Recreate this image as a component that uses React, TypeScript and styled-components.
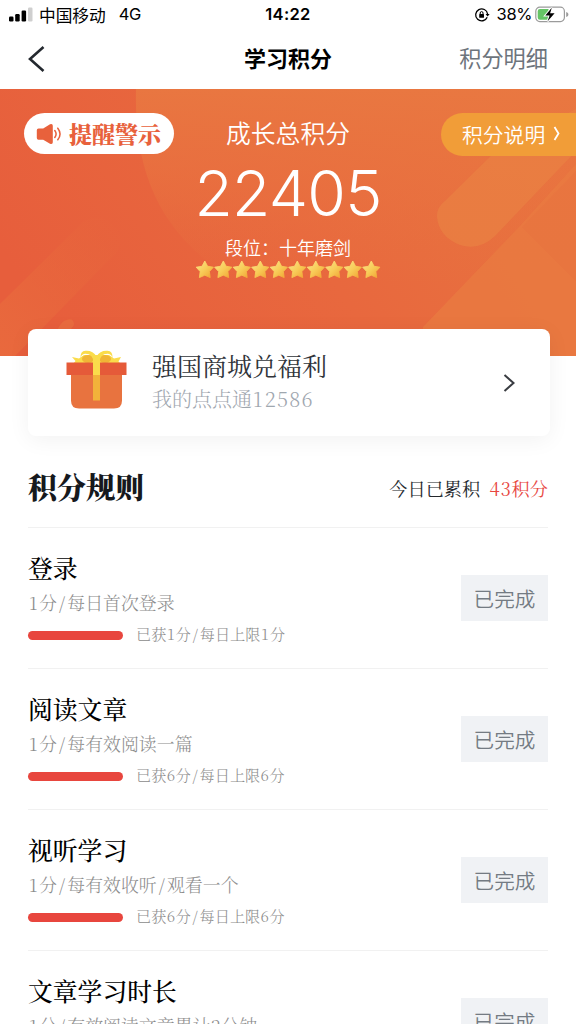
import React from 'react';
import styled, { createGlobalStyle } from 'styled-components';

const sans = `"Noto Sans CJK SC", sans-serif`;
const serif = `"Noto Serif CJK SC", "Source Han Serif SC", "Liberation Serif", "Noto Sans CJK SC", serif`;

const GlobalStyle = createGlobalStyle`
  * { box-sizing: border-box; }
  body { margin: 0; background: #fff; overflow: hidden; }
`;

const Screen = styled.div`
  width: 576px;
  height: 1024px;
  overflow: hidden;
  background: #fff;
  color: #000;
  font-family: ${sans};
`;

const StatusBar = styled.header`
  height: 29px;
  padding: 0 7px 0 9px;
  display: grid;
  grid-template-columns: 1fr auto 1fr;
  align-items: center;
  font-size: 16px;
  line-height: 29px;
`;

const StatusGroup = styled.div<{ $end?: boolean }>`
  display: flex;
  align-items: center;
  justify-content: ${p => (p.$end ? 'flex-end' : 'flex-start')};
  white-space: nowrap;
`;

const Carrier = styled.span`
  margin-left: 6px;
  font-size: 16.7px;
  line-height: 28px;
`;

const Network = styled.span`
  margin-left: 13px;
  font-family: Inter, sans-serif;
  font-size: 16.5px;
  letter-spacing: -0.4px;
`;

const Clock = styled.span`
  margin-right: 2px;
  font-family: Inter, sans-serif;
  font-weight: 600;
  font-size: 16.5px;
  letter-spacing: 0.3px;
`;

const Percent = styled.span`
  margin: 0 3px 0 7px;
  font-family: Inter, sans-serif;
  font-size: 16.5px;
  letter-spacing: -0.4px;
`;

const NavBar = styled.nav`
  height: 60px;
  padding: 0 28px 1px 28px;
  display: grid;
  grid-template-columns: 1fr auto 1fr;
  align-items: center;
`;

const NavTitle = styled.h1`
  margin: 0;
  padding-bottom: 2px;
  font-size: 22px;
  font-weight: 700;
  line-height: 55px;
`;

const NavLink = styled.span`
  justify-self: end;
  padding-bottom: 2px;
  font-size: 22.2px;
  line-height: 55px;
  color: #6d747c;
`;

const Hero = styled.section`
  position: relative;
  height: 267px;
  display: grid;
  grid-template-columns: 1fr 200px 1fr;
  align-items: start;
  color: #fff;
`;

const HeroArt = styled.svg`
  position: absolute;
  inset: 0;
`;

const AlertPill = styled.div`
  position: relative;
  margin: 24px 0 0 24px;
  width: 150px;
  height: 41px;
  padding-left: 12px;
  border-radius: 21px;
  display: flex;
  align-items: center;
  gap: 7px;
  background: #fff;
  color: #e8613c;
  font-family: ${serif};
  font-weight: 900;
  font-size: 23px;
  line-height: 38px;
  white-space: nowrap;
`;

const HelpTab = styled.div`
  position: relative;
  justify-self: end;
  margin-top: 24px;
  width: 135px;
  height: 43px;
  padding: 0 0 0 21px;
  border-radius: 22px 0 0 22px;
  display: flex;
  align-items: center;
  gap: 8px;
  background: #f19d38;
  font-size: 20.8px;
  font-weight: 350;
  line-height: 39px;
  white-space: nowrap;

  & > svg {
    margin-bottom: 2px;
  }
`;

const Score = styled.div`
  position: relative;
  display: flex;
  flex-direction: column;
  align-items: center;
  padding-top: 25px;
  white-space: nowrap;
`;

const ScoreLabel = styled.div`
  font-size: 24.8px;
  font-weight: 350;
  line-height: 36px;
`;

const ScoreValue = styled.div`
  margin-top: 10px;
  font-family: Inter, sans-serif;
  font-weight: 300;
  font-size: 62.5px;
  line-height: 66px;
  letter-spacing: -0.7px;
`;

const Rank = styled.div`
  margin-top: 8px;
  font-size: 18px;
  font-weight: 350;
  line-height: 26px;
`;

const Stars = styled.svg`
  display: block;
`;

const MallCard = styled.section`
  position: relative;
  margin: -27px 26px 0 28px;
  height: 107px;
  padding: 0 35px 0 38px;
  border-radius: 8px;
  display: flex;
  align-items: center;
  background: #fff;
  box-shadow: 0 4px 22px rgba(0, 0, 0, 0.055);

  & > svg:first-child {
    margin-bottom: 6px;
  }
`;

const MallText = styled.div`
  flex: 1;
  margin-left: 25px;
  padding-bottom: 2px;
  font-family: ${serif};
`;

const MallTitle = styled.div`
  font-size: 25px;
  line-height: 34px;
  color: #30343a;
`;

const MallBalance = styled.div`
  font-size: 20px;
  font-weight: 300;
  line-height: 33px;
  color: #9fa7af;
`;

const RulesHeader = styled.section`
  margin: 0 28px;
  height: 92px;
  padding-top: 11px;
  border-bottom: 1px solid #f1f1f1;
  display: flex;
  align-items: center;
  justify-content: space-between;
  font-family: ${serif};
`;

const RulesTitle = styled.h2`
  margin: 0;
  font-size: 29px;
  font-weight: 900;
  line-height: 40px;
  color: #16191d;
`;

const Today = styled.div`
  padding-top: 1px;
  display: flex;
  gap: 9px;
  font-size: 18.2px;
  line-height: 36px;
  color: #24282d;
`;

const TodayPoints = styled.span`
  color: #e8473f;
`;

const Rule = styled.article`
  margin: 0 28px;
  height: 141px;
  border-bottom: 1px solid #f1f1f1;
  display: flex;
  justify-content: space-between;
  font-family: ${serif};
  white-space: nowrap;
`;

const RuleBody = styled.div`
  padding-top: 20px;
`;

const RuleTitle = styled.h3`
  margin: 0 0 1px;
  font-size: 24.8px;
  font-weight: 500;
  line-height: 38px;
`;

const RuleDesc = styled.div`
  font-size: 17.9px;
  font-weight: 300;
  line-height: 30px;
  color: #8c8c8c;
`;

const RuleProgress = styled.div`
  display: flex;
  align-items: center;
  gap: 13px;
  font-size: 15.2px;
  font-weight: 300;
  line-height: 34px;
  color: #8c8c8c;
`;

const Bar = styled.div`
  margin-top: 3px;
  width: 95px;
  height: 9px;
  border-radius: 5px;
  background: #e8463e;
`;

const DoneBadge = styled.div`
  margin-top: 47px;
  width: 87px;
  height: 46px;
  background: #f0f2f5;
  color: #747b83;
  font-family: ${sans};
  font-size: 20.6px;
  font-weight: 350;
  line-height: 46px;
  text-align: center;
`;

const Spaced = styled.span<{ $lead: number; $trail: number }>`
  margin-left: ${p => p.$lead}em;
  letter-spacing: ${p => p.$trail}em;
`;

const Wide = ({ text }: { text: string }) => (
  <span>
    {text.split(/([0-9/])/).map((part, i) => {
      if (part === '1') return <Spaced key={i} $lead={0.05} $trail={0.1}>{part}</Spaced>;
      if (part === '/') return <Spaced key={i} $lead={0.11} $trail={0.12}>{part}</Spaced>;
      if (/^[0-9]$/.test(part)) return <Spaced key={i} $lead={0.02} $trail={0.04}>{part}</Spaced>;
      return part;
    })}
  </span>
);

const rules = [
  { title: '登录', desc: '1分/每日首次登录', got: '已获1分/每日上限1分' },
  { title: '阅读文章', desc: '1分/每有效阅读一篇', got: '已获6分/每日上限6分' },
  { title: '视听学习', desc: '1分/每有效收听/观看一个', got: '已获6分/每日上限6分' },
  { title: '文章学习时长', desc: '1分/有效阅读文章累计2分钟', got: '已获6分/每日上限6分' },
];

const SignalIcon = () => (
  <svg width="24" height="16" viewBox="0 0 24 16">
    <rect x="0" y="9.5" width="4.5" height="5" rx="1.2" />
    <rect x="6.2" y="7" width="4.5" height="7.5" rx="1.2" />
    <rect x="12.6" y="3.5" width="4.5" height="11" rx="1.2" />
    <rect x="19" y="0.5" width="4.5" height="14" rx="1.2" fill="#cfcfcf" />
  </svg>
);

const RotationLockIcon = () => (
  <svg width="16" height="16" viewBox="0 0 16 16" fill="none" stroke="#000" strokeWidth="1.3">
    <path d="M13.2 10.2A6 6 0 1 1 13.6 7" />
    <path d="M11.6 6.9h4l-2 2.700z" fill="#000" stroke="none" />
    <rect x="5.2" y="7.1" width="4.8" height="3.7" rx="0.6" fill="#000" stroke="none" />
    <path d="M6.200 7.500V6a1.400 1.400 0 0 1 2.800 0v1.500" strokeWidth="1" />
  </svg>
);

const BatteryIcon = () => (
  <svg width="34" height="17" viewBox="0 0 34 17">
    <rect x="0.8" y="1.2" width="28.6" height="14.4" rx="4" fill="#fff" stroke="#9b9b9b" strokeWidth="1.2" />
    <path d="M5 3h8.5v10.8H5a2.3 2.3 0 0 1-2.3-2.3V5.3A2.3 2.3 0 0 1 5 3z" fill="#65c466" />
    <path d="M31.2 6v5c1.6-.5 2.2-1.4 2.2-2.5S32.8 6.5 31.2 6z" fill="#9b9b9b" />
    <path d="M16.8 1.8 10.3 9.6h4.3l-2 5.7 7-8h-4.5z" fill="#000" stroke="#fff" strokeWidth="2" paintOrder="stroke" />
  </svg>
);

const Chevron = ({ w, h, color, stroke, left }: { w: number; h: number; color: string; stroke: number; left?: boolean }) => (
  <svg width={w} height={h} viewBox={`0 0 ${w} ${h}`} fill="none" stroke={color} strokeWidth={stroke}>
    <path d={left ? `M${w - 1.5} 1 L2 ${h / 2} L${w - 1.5} ${h - 1}` : `M1.5 1 L${w - 1.5} ${h / 2} L1.5 ${h - 1}`} />
  </svg>
);

const SpeakerIcon = () => (
  <svg width="26" height="22" viewBox="0 0 26 22">
    <path d="M2.5 5.5h4.7L14 1.2q2.8-1 2.8 1.5v16.600q0 2.500-2.800 1.500L7.200 16.800H2.500Q.8 16.800.8 15V7.200q0-1.700 1.700-1.700z" fill="#e8613c" />
    <path d="M18.800 7.500q2.600 3.500 0 7M21.800 5.200q4.500 5.800 0 11.600" fill="none" stroke="#e8613c" strokeWidth="1.5" strokeLinecap="round" />
  </svg>
);

const GiftIcon = () => (
  <svg width="61" height="60" viewBox="0 0 61 60">
    <path d="M6 7l7 1.500 5-3.500h25l5 3.500L55 7l-2.500 4.500L55 14l-5 1H11l-4-1 2.500-3z" fill="#fadc4b" />
    <path d="M5 20h51v30.500q0 8-8 8H13q-8 0-8-8z" fill="#e8733f" />
    <ellipse cx="22" cy="9" rx="6" ry="4" fill="#f0b536" />
    <ellipse cx="39" cy="9" rx="6" ry="4" fill="#f0b536" />
    <rect x="0.5" y="12.5" width="60" height="12.5" fill="#e55a39" />
    <path d="M27.500 12.500Q27 3.500 19 3.800q-4 .4-4.500 4.700Q14 1 19.500.8 27 .3 30.500 6.500 34 .3 41.500.8 47 1 46.500 8.500 46 4.200 42 3.800 34 3.500 33.500 12.500z" fill="#fadc4b" />
    <rect x="27" y="6.5" width="7" height="18.5" fill="#fadc4b" />
    <rect x="27" y="25" width="7" height="25.5" fill="#f2b23a" />
  </svg>
);

const STAR = 'M9 .5l2.800 5.300 5.800.9-4 4.400.8 6L9 14.700 3.600 17.100l.8-6-4-4.400 5.800-.9z';

const StarRow = () => (
  <Stars width="186" height="20" viewBox="0 0 186 20">
    <defs>
      <linearGradient id="gold" x1="0" y1="0" x2="1" y2="1">
        <stop offset="0" stopColor="#fbe48a" />
        <stop offset="0.5" stopColor="#f8cc58" />
        <stop offset="1" stopColor="#f0a030" />
      </linearGradient>
    </defs>
    {Array.from({ length: 10 }, (_, i) => (
      <path
        key={i}
        d={STAR}
        transform={`translate(${0.8 + i * 18.5} 0.5)`}
        fill="url(#gold)"
        stroke="url(#gold)"
        strokeWidth="0.9"
        strokeLinejoin="round"
      />
    ))}
  </Stars>
);

const HeroBackground = () => (
  <HeroArt width="576" height="267" viewBox="0 0 576 267">
    <defs>
      <linearGradient id="base" x1="0" y1="0.6" x2="1" y2="0.3">
        <stop offset="0" stopColor="#e75e3c" />
        <stop offset="0.5" stopColor="#e8683e" />
        <stop offset="1" stopColor="#e8743f" />
      </linearGradient>
      <linearGradient id="disc" x1="0" y1="0" x2="0" y2="1">
        <stop offset="0" stopColor="#e97841" stopOpacity="0.9" />
        <stop offset="0.4" stopColor="#e97440" stopOpacity="0.65" />
        <stop offset="1" stopColor="#e8703f" stopOpacity="0" />
      </linearGradient>
      <linearGradient id="band" x1="1" y1="0" x2="0" y2="1">
        <stop offset="0" stopColor="#e86a3d" stopOpacity="0" />
        <stop offset="1" stopColor="#e9693d" />
      </linearGradient>
    </defs>
    <rect width="576" height="267" fill="url(#base)" />
    <path d="M136 0C134 75 155 140 225 185L576 200V0z" fill="url(#disc)" />
    <path d="M0 215L84 132q14-8 28 2 15 14 4 30L15 267H0z" fill="url(#band)" />
    <path d="M423 238L520 137L576 75V267H423z" fill="#e97b41" opacity="0.75" />
    <path d="M445 112L500 58L576 20V62L495 147q-16 15-35 9-22-9-23-29 0-9 8-15z" fill="#ea8043" opacity="0.75" />
    <path d="M522 138L576 82V192z" fill="#e8733f" opacity="0.6" />
    <path d="M52 267q2-28 12-35 10-5 10 4l-12 16z" fill="#e97040" opacity="0.7" />
  </HeroArt>
);

export default function App() {
  return (
    <Screen>
      <GlobalStyle />
      <StatusBar>
        <StatusGroup>
          <SignalIcon />
          <Carrier>中国移动</Carrier>
          <Network>4G</Network>
        </StatusGroup>
        <Clock>14:22</Clock>
        <StatusGroup $end>
          <RotationLockIcon />
          <Percent>38%</Percent>
          <BatteryIcon />
        </StatusGroup>
      </StatusBar>
      <NavBar>
        <Chevron w={17} h={26} color="#24292f" stroke={2.6} left />
        <NavTitle>学习积分</NavTitle>
        <NavLink>积分明细</NavLink>
      </NavBar>
      <Hero>
        <HeroBackground />
        <AlertPill>
          <SpeakerIcon />
          提醒警示
        </AlertPill>
        <Score>
          <ScoreLabel>成长总积分</ScoreLabel>
          <ScoreValue>22405</ScoreValue>
          <Rank>段位：十年磨剑</Rank>
          <StarRow />
        </Score>
        <HelpTab>
          积分说明
          <Chevron w={7} h={15} color="#fff" stroke={1.8} />
        </HelpTab>
      </Hero>
      <MallCard>
        <GiftIcon />
        <MallText>
          <MallTitle>强国商城兑福利</MallTitle>
          <MallBalance>
            <Wide text="我的点点通12586" />
          </MallBalance>
        </MallText>
        <Chevron w={12} h={18} color="#3a3d42" stroke={2} />
      </MallCard>
      <RulesHeader>
        <RulesTitle>积分规则</RulesTitle>
        <Today>
          今日已累积
          <TodayPoints>
            <Wide text="43积分" />
          </TodayPoints>
        </Today>
      </RulesHeader>
      {rules.map(rule => (
        <Rule key={rule.title}>
          <RuleBody>
            <RuleTitle>{rule.title}</RuleTitle>
            <RuleDesc>
              <Wide text={rule.desc} />
            </RuleDesc>
            <RuleProgress>
              <Bar />
              <Wide text={rule.got} />
            </RuleProgress>
          </RuleBody>
          <DoneBadge>已完成</DoneBadge>
        </Rule>
      ))}
    </Screen>
  );
}
